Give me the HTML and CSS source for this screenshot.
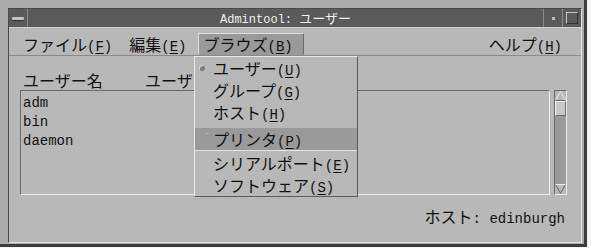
FILE: index.html
```html
<!DOCTYPE html>
<html lang="ja">
<head>
    <meta charset="UTF-8">
    <title>Admintool: ユーザー</title>
    <link rel="stylesheet" href="styles.css">
</head>
<body>
    <div class="frame">
        <div class="window">
            <div class="titlebar">
                <span class="tb-btn tb-menu"><span class="dash"></span></span>
                <span class="tb-title">Admintool: <span class="kana">ユーザー</span></span>
                <span class="tb-btn tb-min"><span class="dot"></span></span>
                <span class="tb-btn tb-max"><span class="sq"></span></span>
            </div>
            <div class="menubar">
                <span class="mi">ファイル<span class="mn">(<u>F</u>)</span></span>
                <span class="mi">編集<span class="mn">(<u>E</u>)</span></span>
                <span class="mi open">ブラウズ<span class="mn">(<u>B</u>)</span></span>
                <span class="mi help">ヘルプ<span class="mn">(<u>H</u>)</span></span>
            </div>
            <div class="content">
                <div class="cols">
                    <span class="col-name">ユーザー名</span>
                    <span>ユーザーID</span>
                </div>
                <div class="listrow">
                    <div class="list">adm<br>bin<br>daemon</div>
                    <div class="scroll">
                        <div class="arrow">
                            <svg width="11" height="10" viewBox="0 0 11 10"><polyline points="0.5,9.5 5.5,0.5 10.5,9.5" fill="none" stroke="#ececec"/><line x1="0.5" y1="9.5" x2="10.5" y2="9.5" stroke="#6a6a6a"/></svg>
                        </div>
                        <div class="thumb"></div>
                        <div class="trough"></div>
                        <div class="arrow">
                            <svg width="11" height="10" viewBox="0 0 11 10"><polyline points="0.5,0.5 5.5,9.5 10.5,0.5" fill="none" stroke="#6a6a6a"/><line x1="0.5" y1="0.5" x2="10.5" y2="0.5" stroke="#ececec"/></svg>
                        </div>
                    </div>
                </div>
                <div class="status">ホスト<span class="mono">: edinburgh</span></div>
            </div>

            <div class="dropdown">
                <div class="di"><span class="radio"></span>ユーザー<span class="mn">(<u>U</u>)</span></div>
                <div class="di">グループ<span class="mn">(<u>G</u>)</span></div>
                <div class="di">ホスト<span class="mn">(<u>H</u>)</span></div>
                <div class="di hl"><span class="speck"></span>プリンタ<span class="mn">(<u>P</u>)</span></div>
                <div class="di">シリアルポート<span class="mn">(<u>E</u>)</span></div>
                <div class="di">ソフトウェア<span class="mn">(<u>S</u>)</span></div>
            </div>
        </div>
    </div>
</body>
</html>
```

FILE: styles.css
```css
body { margin: 0; background: #f4f4f4; font-family: "Noto Sans CJK JP", sans-serif; color: #111; }
.frame { width: 587px; height: 247px; box-sizing: border-box; padding: 8px 2px 1px 8px; background: #ababab; border-right: 3px solid #3c3c3c; border-bottom: 3px solid #3c3c3c; }
.window { position: relative; height: 100%; box-sizing: border-box; display: flex; flex-direction: column; background: #b8b8b8; border: 1px solid; border-color: #4a4a4a #e4e4e4 #e4e4e4 #4a4a4a; }

.titlebar { height: 19px; box-sizing: border-box; display: flex; background: #5a5a5a; border-bottom: 1px solid #d0d0d0; }
.tb-btn { width: 18px; display: flex; align-items: center; justify-content: center; }
.tb-menu { border-right: 1px solid #8a8a8a; }
.tb-min { border-left: 1px solid #8a8a8a; }
.tb-max { border-left: 1px solid #8a8a8a; }
.dash { width: 12px; height: 3px; background: #c4c4c4; border-radius: 1px; box-shadow: 0 1px 0 #333; }
.dot { width: 3px; height: 3px; background: #bdbdbd; }
.sq { width: 10px; height: 10px; border: 1px solid; border-color: #c8c8c8 #333 #333 #c8c8c8; }
.tb-title { flex: 1; text-align: center; color: #f0f0f0; font-family: "Liberation Mono", monospace; font-size: 12px; line-height: 18px; }
.tb-title .kana { font-family: "Noto Sans CJK JP", sans-serif; font-size: 13px; }

.menubar { height: 28px; box-sizing: border-box; display: flex; align-items: flex-end; gap: 7px; padding: 0 14px 0 9px; border-bottom: 1px solid #8a8a8a; font-size: 16px; }
.mi { height: 22px; line-height: 22px; padding: 0 5px; box-sizing: border-box; }
.mi.open { background: #9a9a9a; border: 1px solid; border-color: #e0e0e0 #6a6a6a transparent #e0e0e0; line-height: 20px; padding: 0 10px 0 4px; }
.mi.help { margin-left: auto; }
.mn { font-family: "Liberation Mono", monospace; font-size: 14px; }
.mn u { text-underline-offset: 2px; }

.content { flex: 1; padding: 15px 14px 0 11px; }
.cols { display: flex; padding-left: 3px; font-size: 16px; line-height: 18px; }
.col-name { width: 122px; }
.listrow { display: flex; gap: 4px; margin-top: 1px; height: 105px; }
.list { flex: 1; box-sizing: border-box; border: 1px solid; border-color: #6a6a6a #ededed #ededed #6a6a6a; padding: 3px 2px; font-family: "Liberation Mono", monospace; font-size: 14px; line-height: 19px; }
.scroll { width: 13px; box-sizing: border-box; display: flex; flex-direction: column; border: 1px solid; border-color: #6a6a6a #ededed #ededed #6a6a6a; background: #9a9a9a; }
.arrow { height: 10px; display: flex; justify-content: center; background: #b8b8b8; }
.thumb { height: 15px; box-sizing: border-box; background: #c8c8c8; border: 1px solid; border-color: #f0f0f0 #6a6a6a #6a6a6a #f0f0f0; }
.trough { flex: 1; }
.status { margin-top: 11px; text-align: right; padding-right: 2px; font-size: 16px; line-height: 20px; }
.mono { font-family: "Liberation Mono", monospace; font-size: 14px; }

.dropdown { position: absolute; left: 185px; top: 47px; width: 164px; height: 141px; box-sizing: border-box; background: #b8b8b8; border: 1px solid; border-color: #e8e8e8 #5a5a5a #5a5a5a #e8e8e8; font-size: 16px; }
.di { position: relative; height: 22px; line-height: 22px; padding-left: 18px; }
.di.hl { margin: 5px 0 1px; background: #9a9a9a; border-bottom: 1px solid #e2e2e2; }
.radio { position: absolute; left: 4px; top: 8px; width: 6px; height: 6px; border-radius: 50%; background: #7a7a7a; box-shadow: inset 1px 1px 0 #dcdcdc; }
.speck { position: absolute; left: 11px; top: 5px; width: 1px; height: 1px; background: #e0e0e0; }
```
